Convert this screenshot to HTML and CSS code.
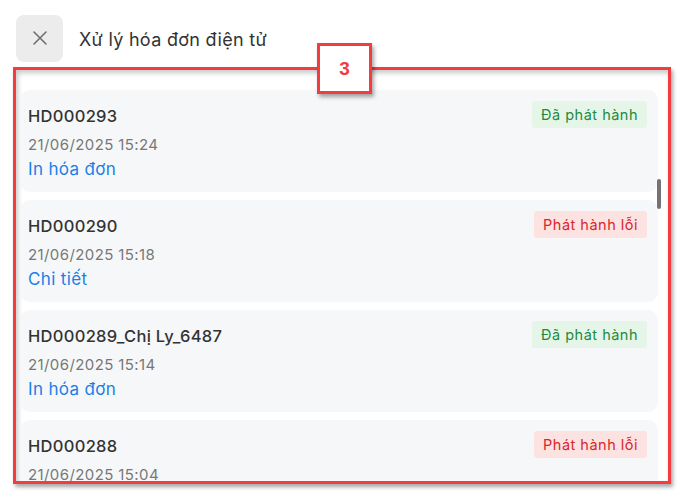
FILE: index.html
```html
<!DOCTYPE html>
<html lang="vi">
<head>
<meta charset="utf-8">
<link rel="stylesheet" href="styles.css">
</head>
<body>
<div class="page">
  <header class="header">
    <button class="close-btn" aria-label="Đóng">
      <svg width="14" height="14" viewBox="0 0 14 14"><path d="M1 1 L13 13 M13 1 L1 13" stroke="#6b6b6b" stroke-width="1.5" stroke-linecap="round" fill="none"/></svg>
    </button>
    <h1 class="title">Xử lý hóa đơn điện tử</h1>
  </header>

  <section class="list-frame">
    <div class="list">
      <div class="card">
        <div class="row">
          <span class="code">HD000293</span>
          <span class="badge ok">Đã phát hành</span>
        </div>
        <div class="date">21/06/2025 15:24</div>
        <a class="link">In hóa đơn</a>
      </div>
      <div class="card">
        <div class="row">
          <span class="code">HD000290</span>
          <span class="badge err">Phát hành lỗi</span>
        </div>
        <div class="date">21/06/2025 15:18</div>
        <a class="link">Chi tiết</a>
      </div>
      <div class="card">
        <div class="row">
          <span class="code">HD000289_Chị Ly_6487</span>
          <span class="badge ok">Đã phát hành</span>
        </div>
        <div class="date">21/06/2025 15:14</div>
        <a class="link">In hóa đơn</a>
      </div>
      <div class="card">
        <div class="row">
          <span class="code">HD000288</span>
          <span class="badge err">Phát hành lỗi</span>
        </div>
        <div class="date">21/06/2025 15:04</div>
        <a class="link">Chi tiết</a>
      </div>
    </div>
    <div class="scroll-thumb"></div>
  </section>

  <div class="marker">3</div>
</div>
</body>
</html>
```

FILE: styles.css
```css
* { box-sizing: border-box; }
html, body { margin: 0; padding: 0; background: #fff; }
body {
  font-family: Inter, "Noto Sans", "Liberation Sans", sans-serif;
  color: #333;
  width: 678px;
  height: 494px;
  overflow: hidden;
}
.page { position: relative; width: 678px; height: 494px; }

.header {
  display: flex;
  align-items: center;
  gap: 16px;
  padding: 15px 16px 0 16px;
  height: 62px;
}
.close-btn {
  width: 47px;
  height: 47px;
  border: none;
  border-radius: 8px;
  background: #ececec;
  display: flex;
  align-items: center;
  justify-content: center;
  padding: 0;
}
.close-btn svg { display: block; margin-top: -1px; }
.title {
  margin: 0;
  font-size: 18px;
  font-weight: 400;
  color: #333;
  letter-spacing: 0.3px;
  padding-top: 2px;
}

.list-frame {
  position: relative;
  margin: 5px 0 0 13px;
  width: 658px;
  height: 417px;
  border: 3px solid #f23c3f;
  box-shadow: 2px 3px 4px rgba(0,0,0,0.35), inset 2px 3px 5px rgba(0,0,0,0.22);
  overflow: hidden;
}
.list {
  display: flex;
  flex-direction: column;
  gap: 8px;
  padding: 20px 10px 0 4px;
}
.card {
  background: #f6f7f9;
  border-radius: 10px;
  padding: 11px 11px 12px 8px;
  height: 102px;
  flex: none;
}
.row {
  display: flex;
  justify-content: space-between;
  align-items: center;
  height: 27px;
}
.code {
  font-size: 16.5px;
  font-weight: 500;
  color: #333;
  letter-spacing: 0.3px;
  padding-top: 3px;
}
.badge {
  font-size: 14.5px;
  height: 27px;
  line-height: 27px;
  padding: 0 9px;
  border-radius: 3px;
  letter-spacing: 0.5px;
}
.badge.ok { background: #e5f6e9; color: #1e8a3f; }
.badge.err { background: #fde2e2; color: #d9252b; }
.date {
  margin-top: 6px;
  font-size: 15px;
  line-height: 22px;
  color: #777;
  letter-spacing: 0.4px;
}
.link {
  display: block;
  font-size: 17px;
  line-height: 24px;
  color: #1a7fe8;
  letter-spacing: 0.35px;
  margin-top: 1px;
}
.scroll-thumb {
  position: absolute;
  left: 641px;
  top: 109px;
  width: 4px;
  height: 30px;
  border-radius: 2px;
  background: #737373;
}

.marker {
  position: absolute;
  left: 317px;
  top: 43px;
  width: 55px;
  height: 51px;
  background: #fff;
  border: 3px solid #f23c3f;
  box-shadow: 2px 3px 4px rgba(0,0,0,0.35);
  color: #f23c3f;
  font-family: "Liberation Sans", Arial, sans-serif;
  font-weight: 700;
  font-size: 19px;
  display: flex;
  align-items: center;
  justify-content: center;
}
```
